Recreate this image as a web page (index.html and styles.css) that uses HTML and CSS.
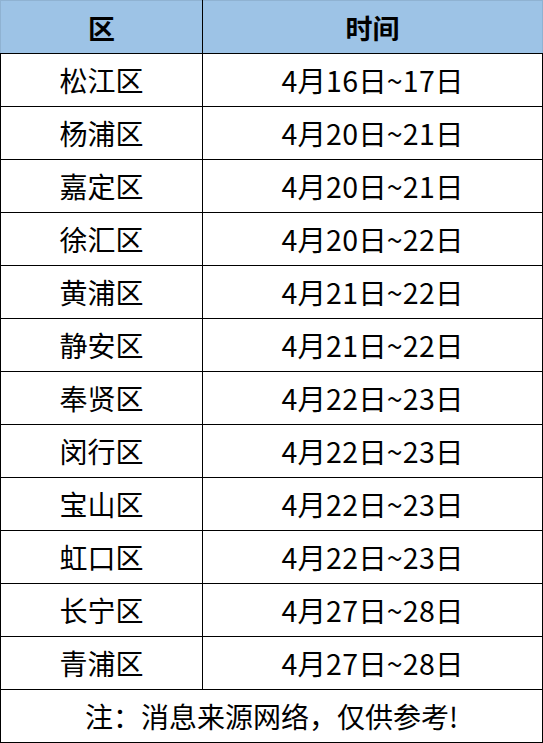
FILE: index.html
```html
<!DOCTYPE html>
<html lang="zh">
<head>
<meta charset="utf-8">
<link rel="stylesheet" href="styles.css">
</head>
<body>
<table class="sched">
  <thead>
    <tr><th class="c1">区</th><th class="c2">时间</th></tr>
  </thead>
  <tbody>
    <tr><td>松江区</td><td class="d">4月16日~17日</td></tr>
    <tr><td>杨浦区</td><td class="d">4月20日~21日</td></tr>
    <tr><td>嘉定区</td><td class="d">4月20日~21日</td></tr>
    <tr><td>徐汇区</td><td class="d">4月20日~22日</td></tr>
    <tr><td>黄浦区</td><td class="d">4月21日~22日</td></tr>
    <tr><td>静安区</td><td class="d">4月21日~22日</td></tr>
    <tr><td>奉贤区</td><td class="d">4月22日~23日</td></tr>
    <tr><td>闵行区</td><td class="d">4月22日~23日</td></tr>
    <tr><td>宝山区</td><td class="d">4月22日~23日</td></tr>
    <tr><td>虹口区</td><td class="d">4月22日~23日</td></tr>
    <tr><td>长宁区</td><td class="d">4月27日~28日</td></tr>
    <tr><td>青浦区</td><td class="d">4月27日~28日</td></tr>
    <tr><td class="note" colspan="2">注：消息来源网络，仅供参考!</td></tr>
  </tbody>
</table>
</body>
</html>
```
FILE: styles.css
```css
html, body {
  margin: 0;
  padding: 0;
  background: #fff;
}
.sched {
  border-collapse: collapse;
  width: 543px;
  table-layout: fixed;
  font-family: "Noto Sans CJK SC", "Microsoft YaHei", sans-serif;
  font-size: 28px;
  color: #000;
}
.sched th, .sched td {
  padding: 0;
  text-align: center;
  vertical-align: middle;
  line-height: 1;
  box-sizing: border-box;
}
.sched th {
  height: 53px;
  background: #9dc3e6;
  border: 1px solid #8fb2d2;
  border-bottom: 1px solid #000;
  font-weight: bold;
  font-size: 27px;
}
.sched .c1 { width: 202px; border-right: 1px solid #000; }
.sched td {
  height: 53px;
  border: 1px solid #000;
}
.sched .d {
  font-size: 28.5px;
  letter-spacing: 0.2px;
}
```
